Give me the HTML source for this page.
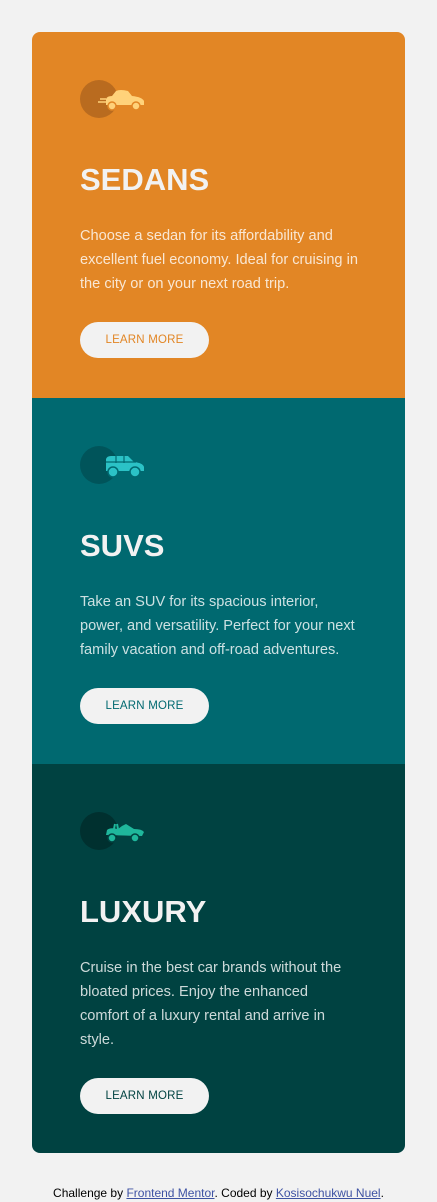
<!DOCTYPE html>
<html><head><meta charset="utf-8"><style>
*{margin:0;padding:0;box-sizing:border-box}
body{width:437px;height:1202px;background:#f2f2f2;font-family:"Liberation Sans",sans-serif;position:relative;overflow:hidden}
.card{position:absolute;left:32px;top:32px;width:373px;border-radius:8px;overflow:hidden}
.sec{position:relative;padding-left:48px}
.s1{background:#e28625;height:366px}
.s2{background:#006970;height:366px}
.s3{background:#004241;height:389px}
.circ{position:absolute;left:48px;top:48px;width:38px;height:38px;border-radius:50%}
.ic{position:absolute;left:66px;top:55px}
h2{position:absolute;left:48px;top:130px;font-family:"Comic Sans MS","Liberation Sans",sans-serif;font-weight:bold;font-size:31px;color:#f2f2f2;letter-spacing:0}
p{position:absolute;left:48px;top:192px;white-space:nowrap;font-size:14.6px;line-height:24px;color:rgba(255,255,255,.8)}
.btn{position:absolute;left:48px;width:129px;height:36px;border-radius:18px;background:#f2f2f2;font-size:11.5px;text-align:center;line-height:36px;letter-spacing:.2px}
.foot{position:absolute;top:1186px;left:0;width:437px;text-align:center;font-size:12px;font-family:"Comic Sans MS","Liberation Sans",sans-serif}
.foot a{color:#3e52a3;text-decoration:underline}
</style></head><body>
<div class="card">
<div class="sec s1">
 <div class="circ" style="background:#b96b1f"></div>
 <svg class="ic" width="48" height="26" viewBox="0 0 48 26"><path d="M8 18 L8 12 Q9 9 14 9 L18 4 Q22 2 30 4 L34 9 Q44 10 46 14 L46 18 Z" fill="#ffd27a"/><circle cx="14" cy="19" r="4" fill="#ffd27a" stroke="#e28625" stroke-width="1.5"/><circle cx="38" cy="19" r="4" fill="#ffd27a" stroke="#e28625" stroke-width="1.5"/><path d="M2 12h6M0 15h8" stroke="#ffd27a" stroke-width="1.5"/></svg>
 <h2>SEDANS</h2>
 <p>Choose a sedan for its affordability and<br>excellent fuel economy. Ideal for cruising in<br>the city or on your next road trip.</p>
 <div class="btn" style="top:290px;color:#e28625">LEARN MORE</div>
</div>
<div class="sec s2">
 <div class="circ" style="background:#00545a"></div>
 <svg class="ic" width="48" height="26" viewBox="0 0 48 26"><path d="M8 18 L8 6 Q9 3 13 3 L30 3 L36 9 Q45 10 46 14 L46 18 Z" fill="#2bc2c6"/><circle cx="15" cy="19" r="5" fill="#2bc2c6" stroke="#006970" stroke-width="1.5"/><circle cx="37" cy="19" r="5" fill="#2bc2c6" stroke="#006970" stroke-width="1.5"/><path d="M18 3v7M26 3v7M8 9h30" stroke="#006970" stroke-width="1.2"/></svg>
 <h2>SUVS</h2>
 <p>Take an SUV for its spacious interior,<br>power, and versatility. Perfect for your next<br>family vacation and off-road adventures.</p>
 <div class="btn" style="top:290px;color:#006970">LEARN MORE</div>
</div>
<div class="sec s3">
 <div class="circ" style="background:#00302f"></div>
 <svg class="ic" width="48" height="26" viewBox="0 0 48 26"><path d="M8 16 L9 11 Q12 8 20 10 L24 7 L28 5 L36 10 Q44 10 46 13 L44 17 Z" fill="#1fb79c"/><circle cx="14" cy="19" r="4" fill="#1fb79c" stroke="#004241" stroke-width="1.5"/><circle cx="37" cy="19" r="4" fill="#1fb79c" stroke="#004241" stroke-width="1.5"/><path d="M16 10l1-5M20 10l-1-5" stroke="#1fb79c" stroke-width="2"/></svg>
 <h2>LUXURY</h2>
 <p>Cruise in the best car brands without the<br>bloated prices. Enjoy the enhanced<br>comfort of a luxury rental and arrive in<br>style.</p>
 <div class="btn" style="top:314px;color:#004241">LEARN MORE</div>
</div>
</div>
<div class="foot">Challenge by <a>Frontend Mentor</a>. Coded by <a>Kosisochukwu Nuel</a>.</div>
</body></html>
